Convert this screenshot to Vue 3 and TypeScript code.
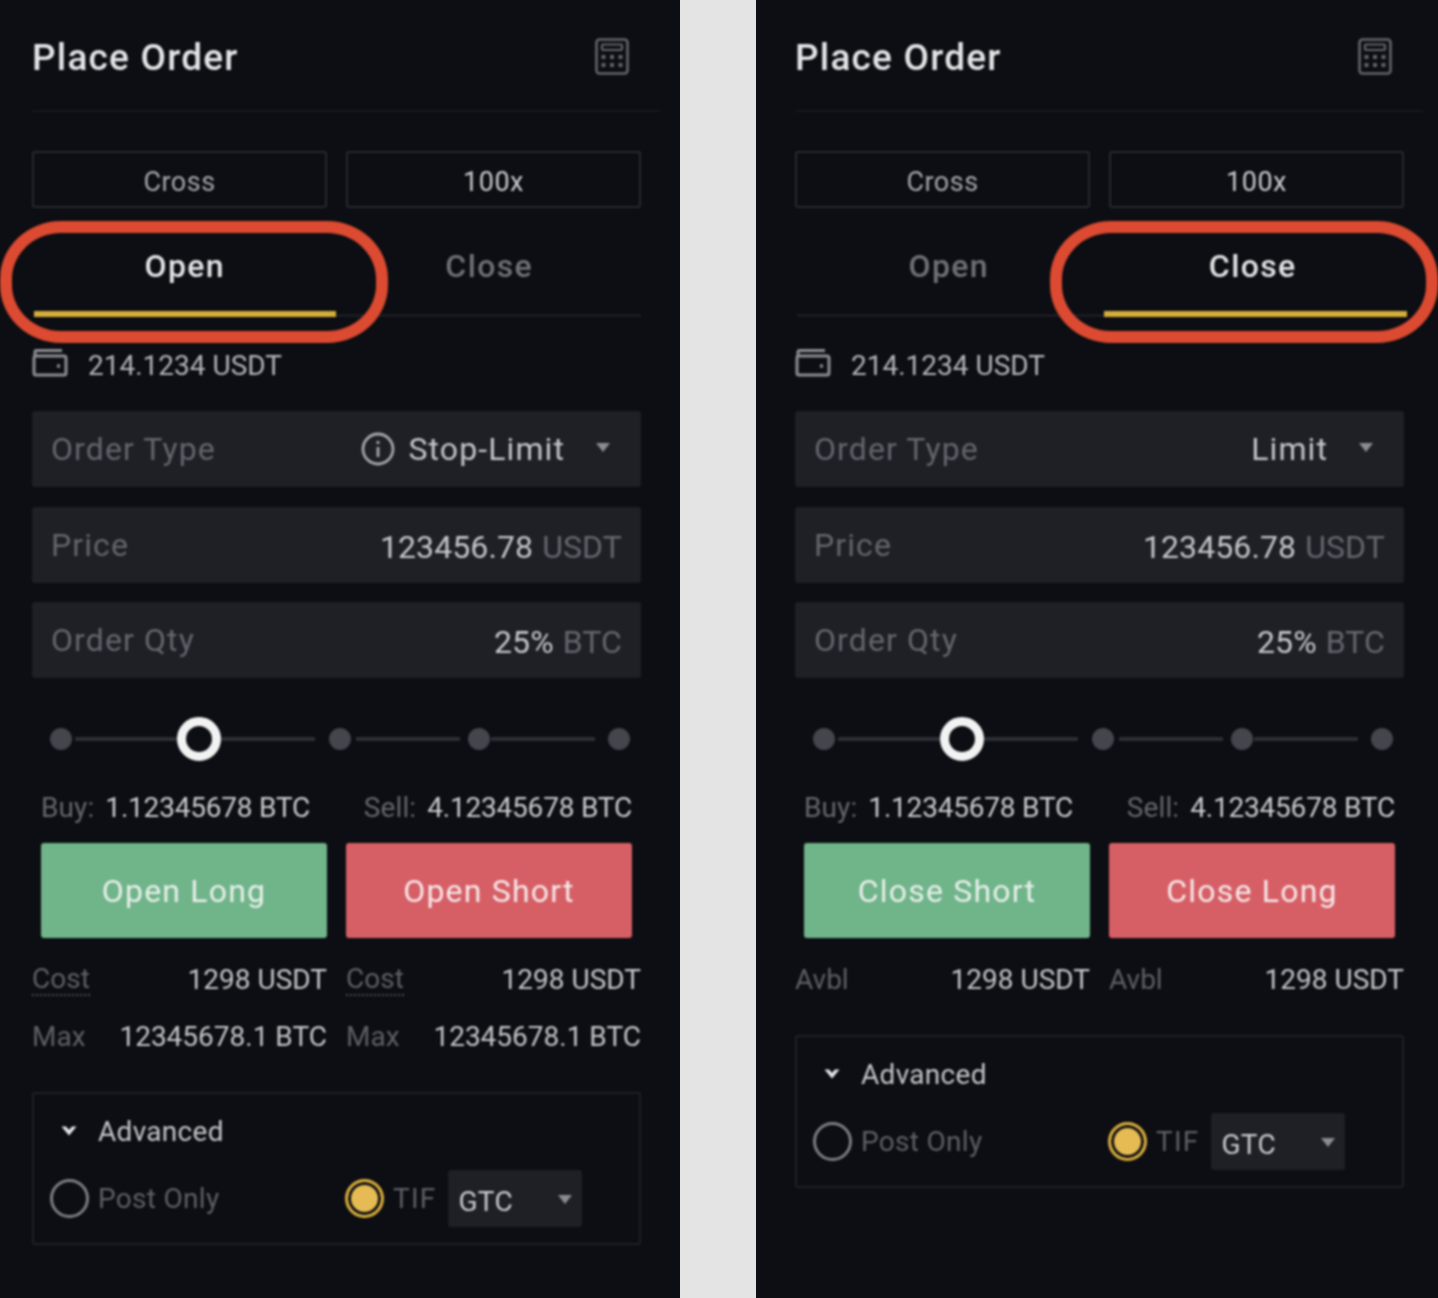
<script setup lang="ts">
interface Stat {
  label: string;
  value: string;
  dotted?: boolean;
}

interface Panel {
  id: string;
  active: 'Open' | 'Close';
  info: boolean;
  orderType: string;
  buttons: [string, string];
  rows: Stat[];
}

const tabs = ['Open', 'Close'];

const track = [
  { type: 'dot', w: 22, ml: 18 },
  { type: 'line', w: 103, ml: 3 },
  { type: 'thumb', w: 44, ml: -1 },
  { type: 'line', w: 94, ml: 0 },
  { type: 'dot', w: 22, ml: 14 },
  { type: 'line', w: 104, ml: 5 },
  { type: 'dot', w: 22, ml: 8 },
  { type: 'line', w: 104, ml: 1 },
  { type: 'dot', w: 22, ml: 13 },
];

const panels: Panel[] = [
  {
    id: 'open',
    active: 'Open',
    info: true,
    orderType: 'Stop-Limit',
    buttons: ['Open Long', 'Open Short'],
    rows: [
      { label: 'Cost', value: '1298 USDT', dotted: true },
      { label: 'Max', value: '12345678.1 BTC' },
    ],
  },
  {
    id: 'close',
    active: 'Close',
    info: false,
    orderType: 'Limit',
    buttons: ['Close Short', 'Close Long'],
    rows: [{ label: 'Avbl', value: '1298 USDT' }],
  },
];
</script>

<template>
  <div class="page">
    <section v-for="panel in panels" :key="panel.id" class="panel" :class="panel.id">
      <div class="inner">
        <header class="head">
          <h2>Place Order</h2>
          <svg class="calc" width="34" height="37" viewBox="0 0 34 37" fill="none">
            <rect x="1.5" y="1.5" width="31" height="34" rx="3" stroke="#62656b" stroke-width="2.6" />
            <rect x="7" y="6.5" width="20" height="5.5" rx="1" stroke="#62656b" stroke-width="2.2" />
            <g fill="#62656b">
              <rect x="6.5" y="17" width="4" height="4" />
              <rect x="15" y="17" width="4" height="4" />
              <rect x="23.5" y="17" width="4" height="4" />
              <rect x="6.5" y="25" width="4" height="4" />
              <rect x="15" y="25" width="4" height="4" />
              <rect x="23.5" y="25" width="4" height="4" />
            </g>
          </svg>
        </header>

        <div class="modes">
          <button class="mode dim-white">Cross</button>
          <button class="mode">100x</button>
        </div>

        <div class="tabs">
          <div v-for="tab in tabs" :key="tab" class="tab" :class="{ on: tab === panel.active }">{{ tab }}</div>
        </div>

        <div class="balance">
          <svg width="36" height="30" viewBox="0 0 36 30" fill="none" stroke="#8b8e93" stroke-width="3">
            <path d="M3 8V4q0-1.500 1.500-1.500H30" />
            <rect x="2" y="8" width="32" height="19" rx="2" />
            <path d="M25 18h3" stroke-width="3.4" />
          </svg>
          <span>214.1234 USDT</span>
        </div>

        <div class="fields">
          <div class="field">
            <span class="field-label">Order Type</span>
            <span class="field-value select-value">
              <svg v-if="panel.info" class="info" width="34" height="34" viewBox="0 0 34 34" fill="none" stroke="#a5a7ab" stroke-width="2.8">
                <circle cx="17" cy="17" r="15" />
                <path d="M17 15v10M17 9v3" />
              </svg>
              <span class="strong">{{ panel.orderType }}</span>
              <i class="caret"></i>
            </span>
          </div>
          <div class="field">
            <span class="field-label">Price</span>
            <span class="field-value"><span class="strong">123456.78</span> USDT</span>
          </div>
          <div class="field">
            <span class="field-label">Order Qty</span>
            <span class="field-value"><span class="strong">25%</span> BTC</span>
          </div>
        </div>

        <div class="slider">
          <span
            v-for="(item, i) in track"
            :key="i"
            :class="item.type"
            :style="{ width: item.w + 'px', marginLeft: item.ml + 'px' }"
          ></span>
        </div>

        <div class="amounts">
          <span>Buy: <b>1.12345678 BTC</b></span>
          <span>Sell: <b>4.12345678 BTC</b></span>
        </div>

        <div class="actions">
          <button class="action green">{{ panel.buttons[0] }}</button>
          <button class="action red">{{ panel.buttons[1] }}</button>
        </div>

        <div class="stats">
          <div v-for="col in 2" :key="col" class="stat-col">
            <div v-for="row in panel.rows" :key="row.label" class="stat">
              <span class="stat-label" :class="{ dotted: row.dotted }">{{ row.label }}</span>
              <span class="stat-value">{{ row.value }}</span>
            </div>
          </div>
        </div>

        <div class="advanced">
          <div class="adv-head">
            <svg width="16" height="10" viewBox="0 0 16 10"><path d="M0.500 0.500h4.500L8 4l3-3.500h4.500L8 9.500z" fill="#e6e7e9" /></svg>
            <span>Advanced</span>
          </div>
          <div class="adv-row">
            <label class="opt post">
              <i class="radio"></i>
              <span>Post Only</span>
            </label>
            <label class="opt tif">
              <i class="radio checked"></i>
              <span>TIF</span>
            </label>
            <div class="gtc">
              <span>GTC</span>
              <i class="caret"></i>
            </div>
          </div>
        </div>

        <div class="ring"></div>
      </div>
    </section>
  </div>
</template>

<style>
body {
  background: #e4e4e4;
}
</style>

<style scoped>
.page {
  display: flex;
  justify-content: space-between;
  width: 1438px;
  height: 1298px;
  overflow: hidden;
  background: #e4e4e4;
  font-family: Roboto, "Liberation Sans", sans-serif;
  color: #e6e7e9;
}

.panel {
  width: 680px;
  height: 1298px;
  background: #0c0e13;
}

.panel.close {
  width: 682px;
}

.inner {
  position: relative;
  height: 100%;
  box-sizing: border-box;
  padding: 0 39px 0 32px;
  filter: blur(1px);
}

.close .inner {
  padding: 0 34px 0 39px;
}

.head {
  display: flex;
  align-items: center;
  justify-content: space-between;
  height: 112px;
  margin-right: -19px;
  padding: 0 31px 0 0;
  box-sizing: border-box;
  border-bottom: 2px solid #17191e;
}

.head h2 {
  margin: 4px 0 0;
  font-size: 37px;
  font-weight: 500;
  letter-spacing: 1.2px;
  color: #e4e5e7;
}

.calc {
  margin-top: 3px;
}

.modes,
.actions {
  display: grid;
  grid-template-columns: 1fr 1fr;
  gap: 19px;
}

.modes {
  margin-top: 39px;
}

.mode {
  height: 57px;
  padding: 5px 0 0;
  background: none;
  border: 2px solid #26292f;
  border-radius: 3px;
  font: 400 27px Roboto, sans-serif;
  letter-spacing: 0.5px;
  color: #c9cbce;
}

.mode.dim-white {
  color: #a5a7ab;
}

.tabs {
  display: grid;
  grid-template-columns: 1fr 1fr;
  height: 109px;
  margin-left: 2px;
  border-bottom: 3px solid #1a1c21;
  box-sizing: border-box;
}

.tab {
  display: flex;
  align-items: center;
  justify-content: center;
  height: 109px;
  box-sizing: border-box;
  padding-top: 12px;
  border-bottom: 6px solid transparent;
  font-size: 32px;
  font-weight: 500;
  letter-spacing: 1.4px;
  color: #6f7277;
}

.tab.on {
  color: #e4e5e7;
  border-bottom-color: #d4ad3b;
  margin-right: 2px;
}

.close .tab.on {
  margin: 0 -3px 0 3px;
  padding-right: 5px;
}

.balance {
  display: flex;
  align-items: center;
  gap: 20px;
  height: 94px;
  padding-top: 3px;
  box-sizing: border-box;
  font-size: 28px;
  color: #b3b5b9;
}

.balance svg {
  margin-top: -6px;
}

.fields {
  display: flex;
  flex-direction: column;
  gap: 19.5px;
}

.field {
  display: flex;
  align-items: center;
  justify-content: space-between;
  height: 76px;
  padding: 0 19px;
  background: #1e2026;
  border-radius: 3px;
  font-size: 32px;
  color: #63666c;
}

.field-label {
  letter-spacing: 1.1px;
}

.field-value {
  display: flex;
  align-items: center;
  gap: 9px;
  margin-top: 4px;
  letter-spacing: 0.1px;
}

.select-value {
  margin-top: 0;
  gap: 13px;
  letter-spacing: 1.1px;
}

.strong {
  color: #c4c6c9;
}

.caret {
  display: block;
  width: 0;
  height: 0;
  border-left: 7px solid transparent;
  border-right: 7px solid transparent;
  border-top: 9px solid #8a8c91;
}

.select-value .caret {
  margin: 0 12px 4px 18px;
}

.slider {
  display: flex;
  align-items: center;
  height: 44px;
  margin-top: 39px;
}

.dot {
  flex: none;
  height: 22px;
  border-radius: 50%;
  background: #43464c;
}

.line {
  flex: none;
  height: 4px;
  background: #2c2f35;
}

.thumb {
  flex: none;
  height: 44px;
  box-sizing: border-box;
  border: 9px solid #f2f2f2;
  border-radius: 50%;
  background: #0c0e13;
}

.amounts {
  display: flex;
  justify-content: space-between;
  height: 40px;
  align-items: center;
  margin-top: 26px;
  padding: 0 9px;
  font-size: 28px;
  letter-spacing: 0.1px;
  color: #64676d;
}

.amounts b {
  margin-left: 4px;
  font-weight: 400;
  letter-spacing: -0.2px;
  color: #c9cbce;
}

.actions {
  margin-top: 16px;
  padding: 0 9px;
}

.action {
  height: 95px;
  padding: 0;
  border: 0;
  border-radius: 3px;
  font: 400 32px Roboto, sans-serif;
  letter-spacing: 1.2px;
  color: #e8f0ea;
}

.green {
  background: #70b48a;
}

.red {
  background: #d65f66;
  color: #f6e8e9;
}

.stats {
  display: grid;
  grid-template-columns: 295px 295px;
  gap: 19px;
  margin-top: 21px;
}

.stat-col {
  display: flex;
  flex-direction: column;
  gap: 17px;
}

.stat {
  display: flex;
  align-items: center;
  justify-content: space-between;
  height: 40px;
  font-size: 28px;
  color: #c4c6c9;
}

.stat-label {
  color: #5d6066;
}

.dotted {
  padding-top: 2px;
  border-bottom: 2px dotted #4a4d53;
  line-height: 30px;
}

.advanced {
  margin-top: 36px;
  height: 153px;
  box-sizing: border-box;
  border: 2px solid #1f2126;
  border-radius: 3px;
  padding: 0 16px;
}

.adv-head {
  display: flex;
  align-items: center;
  gap: 21px;
  height: 38px;
  margin-top: 18px;
  padding-left: 11px;
  font-size: 28px;
  letter-spacing: 0.3px;
  color: #c4c6c9;
}

.adv-row {
  display: flex;
  align-items: center;
  height: 57px;
  margin-top: 20px;
  font-size: 28px;
  letter-spacing: 0.3px;
  color: #5d6066;
}

.opt {
  display: flex;
  align-items: center;
  gap: 9px;
}

.post {
  width: 295px;
}

.tif {
  margin-right: 12px;
}

.tif span {
  letter-spacing: 1.2px;
}

.radio {
  display: block;
  width: 39px;
  height: 39px;
  box-sizing: border-box;
  border: 3px solid #7b7e83;
  border-radius: 50%;
}

.radio.checked {
  border-color: #d9ad3c;
  background: #e6bb53;
  box-shadow: inset 0 0 0 3px #0c0e13;
}

.gtc {
  display: flex;
  align-items: center;
  justify-content: space-between;
  width: 134px;
  height: 57px;
  padding: 6px 10px 0;
  box-sizing: border-box;
  background: #1e2026;
  border-radius: 3px;
  font-size: 28px;
  color: #c9cbce;
}

.gtc .caret {
  margin-bottom: 4px;
}

/* red annotation drawn over the active tab */
.ring {
  position: absolute;
  top: 221px;
  left: 0;
  width: 388px;
  height: 122px;
  box-sizing: border-box;
  border: 12px solid #dc4a31;
  border-radius: 61px / 58px;
}

.close .ring {
  left: 294px;
}
</style>
